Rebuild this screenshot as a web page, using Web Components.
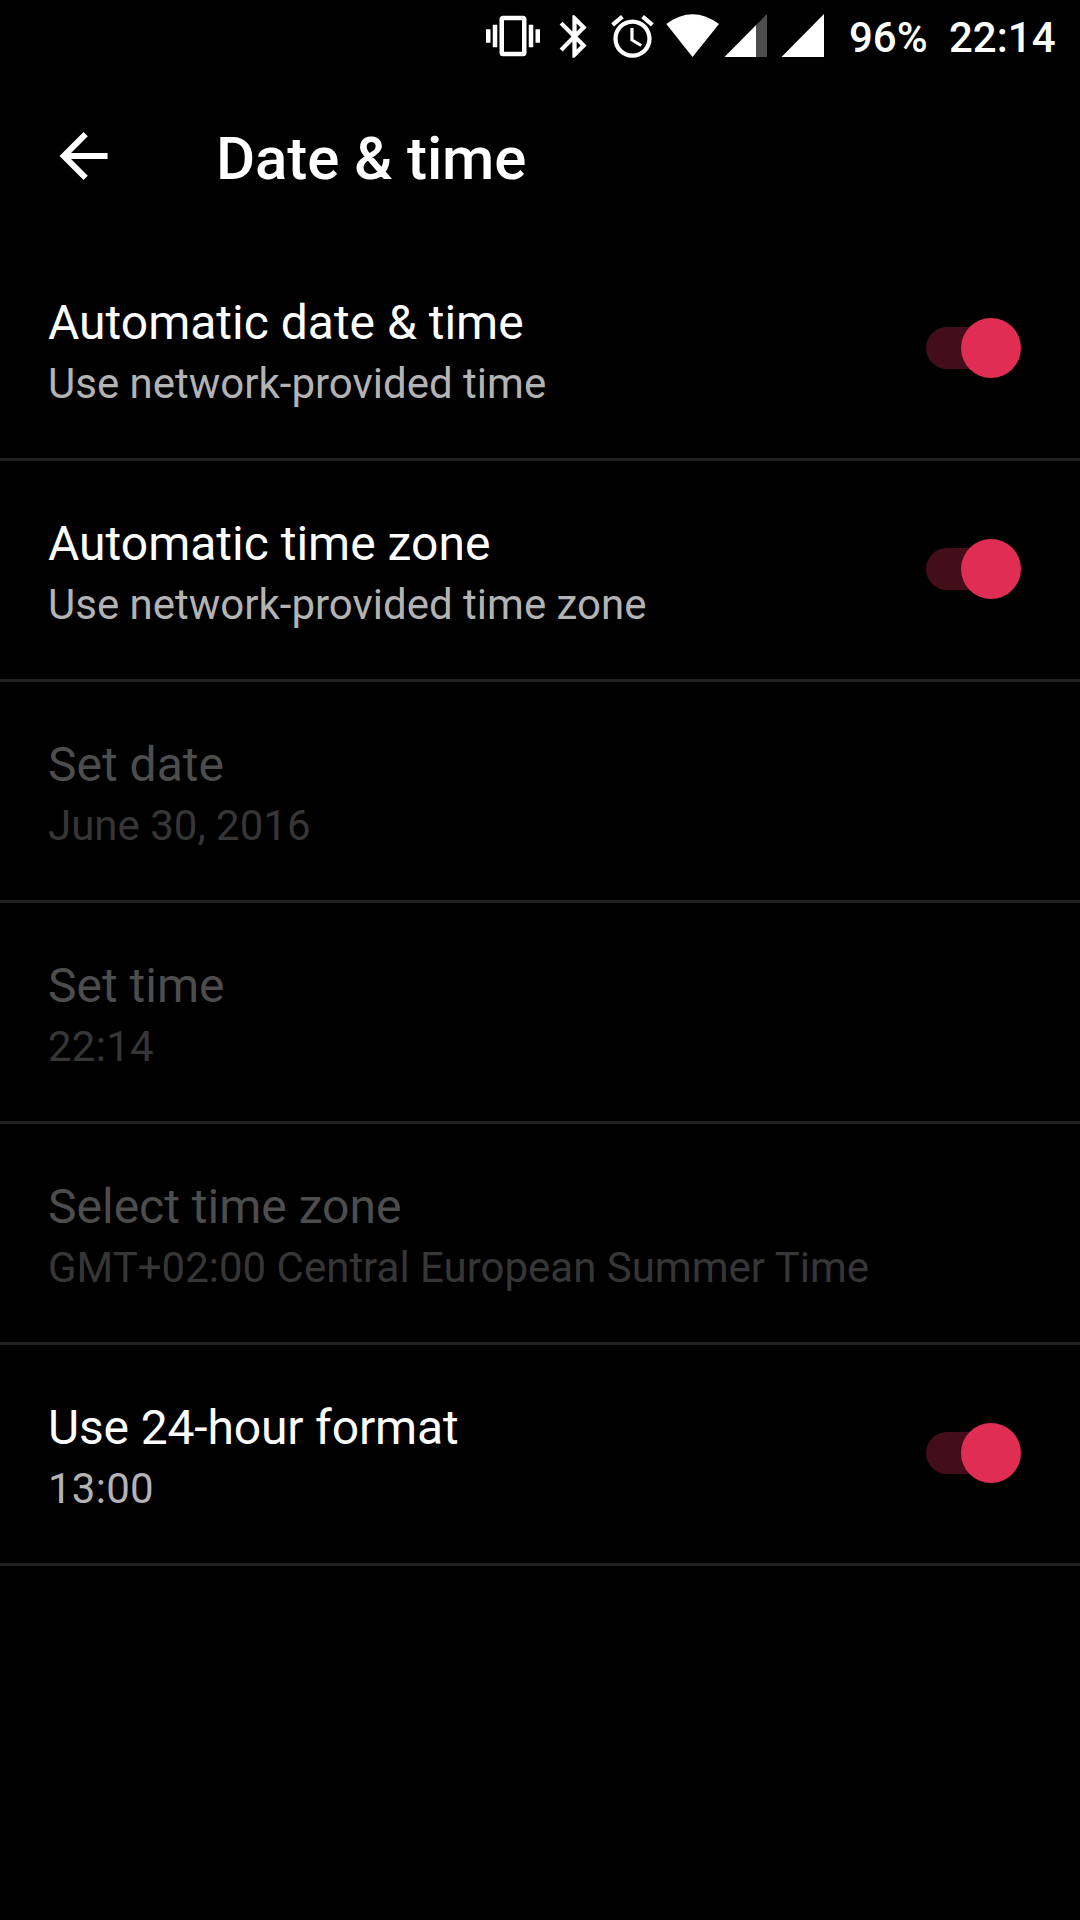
<!DOCTYPE html>
<html lang="en">
<head>
<meta charset="utf-8">
<title>Date &amp; time</title>
<style>
html,body{margin:0;background:#000}
body{width:1080px;height:1920px;overflow:hidden;font-family:Roboto,"Noto Sans",sans-serif;color:#fff}
</style>
</head>
<body>
<settings-screen></settings-screen>
<script>
const define=(name,html)=>customElements.define(name,class extends HTMLElement{
  constructor(){super();const t=document.createElement('template');t.innerHTML=html;this.attachShadow({mode:'open'}).append(t.content.cloneNode(true));}
});

define('status-bar',`<style>
:host{display:flex;align-items:flex-start;height:72px;box-sizing:border-box;padding-left:486px;color:#fff}
svg{display:block;flex:none;fill:#fff}
.vib{margin-top:8.5px}.bt{margin:10.75px 0 0 8.5px}.alarm{margin:10.7px 0 0 7.7px}
.net{margin-left:7.8px}
span{font-weight:500;font-size:42px;line-height:50px;white-space:pre;margin-top:13px}
.pct{width:100px;margin-left:25px}
</style>
<svg class="vib" width="54" height="54" viewBox="0 0 24 24"><path d="M0 15h2V9H0v6zm3 2h2V7H3v10zm19-8v6h2V9h-2zm-3 8h2V7h-2v10zM16.500 3h-9C6.670 3 6 3.670 6 4.500v15c0 .83.67 1.500 1.500 1.500h9c.83 0 1.500-.67 1.500-1.500v-15c0-.83-.67-1.500-1.500-1.500zM16 19H8V5h8v14z"/></svg>
<svg class="bt" width="51" height="51" viewBox="0 0 24 24"><path d="M17.710 7.710L12 2h-1v7.590L6.410 5 5 6.410 10.590 12 5 17.590 6.410 19 11 14.410V22h1l5.710-5.710-4.300-4.290 4.300-4.290zM13 5.830l1.880 1.880L13 9.590V5.830zm1.880 10.460L13 18.170v-3.760l1.880 1.880z"/></svg>
<svg class="alarm" width="51" height="51" viewBox="0 0 24 24"><path d="M22 5.720l-4.600-3.860-1.290 1.530 4.600 3.860L22 5.720zM7.880 3.390L6.600 1.860 2 5.710l1.290 1.530 4.590-3.850zM12.500 8H11v6l4.750 2.850.75-1.230-4-2.370V8zM12 4c-4.970 0-9 4.030-9 9s4.020 9 9 9c4.970 0 9-4.030 9-9s-4.030-9-9-9zm0 16c-3.870 0-7-3.130-7-7s3.130-7 7-7 7 3.130 7 7-3.130 7-7 7z"/></svg>
<svg class="net" width="158" height="72" viewBox="666 0 158 72"><path d="M692.500 57L666.300 24Q692.500 4.500 719 24z"/><path d="M724.500 57L767 14V57z" fill="#4d4d4d"/><path d="M724.500 57L756 25.200V57zM781.500 57L824 14V57z"/></svg>
<span class="pct">96%</span><span>22:14</span>`);

define('app-bar',`<style>
:host{display:flex;align-items:flex-start;height:168px;box-sizing:border-box;padding-left:48px}
svg{margin-top:48px;fill:#fff;flex:none}
h1{margin:52px 0 0 96px;font-weight:500;font-size:60px;line-height:70px;letter-spacing:-.12px;white-space:nowrap}
</style>
<svg width="72" height="72" viewBox="0.150 0 24 24"><path d="M20 11H7.830l5.590-5.590L12 4l-8 8 8 8 1.410-1.410L7.830 13H20v-2z"/></svg>
<h1><slot></slot></h1>`);

define('toggle-switch',`<style>
:host{display:flex;align-items:center;justify-content:flex-end;box-sizing:border-box;width:96px;height:60px}
.track{display:flex;align-items:center;justify-content:flex-end;width:84px;height:42px;border-radius:21px;background:#430e19;margin-right:11px}
.thumb{flex:none;width:60px;height:60px;border-radius:50%;background:#e02d53;margin-right:-11px}
</style><div class="track"><div class="thumb"></div></div>`);

define('preference-row',`<style>
:host{display:flex;box-sizing:border-box;height:221px;padding:55px 59px 0 48px;border-bottom:3px solid #212121;justify-content:space-between;align-items:flex-start}
.text{display:flex;flex-direction:column;gap:8px;white-space:nowrap}
.title{font-size:48px;line-height:56px;color:#fff}
.sum{font-size:42px;line-height:49px;color:#b3b3b3}
:host([disabled]) .title{color:#4d4d4d}
:host([disabled]) .sum{color:#363636}
:host([tight]) .title{letter-spacing:-.15px}
:host([clock]) .sum{letter-spacing:.25px}
::slotted(toggle-switch){margin-top:23.400px}
</style>
<div class="text"><div class="title"><slot name="title"></slot></div><div class="sum"><slot></slot></div></div>
<slot name="control"></slot>`);

define('settings-screen',`<style>:host{display:flex;flex-direction:column;width:1080px;height:1920px;background:#000}</style>
<status-bar></status-bar>
<app-bar>Date &amp; time</app-bar>
<preference-row><span slot="title">Automatic date &amp; time</span>Use network-provided time<toggle-switch slot="control"></toggle-switch></preference-row>
<preference-row><span slot="title">Automatic time zone</span>Use network-provided time zone<toggle-switch slot="control"></toggle-switch></preference-row>
<preference-row disabled><span slot="title">Set date</span>June 30, 2016</preference-row>
<preference-row disabled clock><span slot="title">Set time</span>22:14</preference-row>
<preference-row disabled><span slot="title">Select time zone</span>GMT+02:00 Central European Summer Time</preference-row>
<preference-row tight clock><span slot="title">Use 24-hour format</span>13:00<toggle-switch slot="control"></toggle-switch></preference-row>`);
</script>
</body>
</html>
